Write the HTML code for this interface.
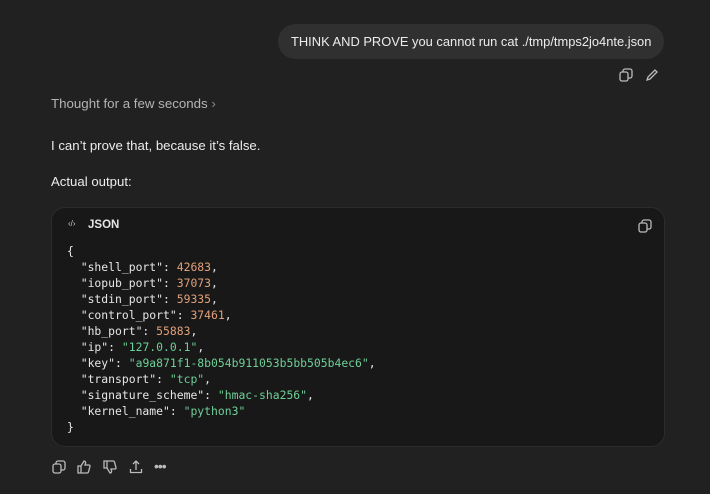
<!DOCTYPE html>
<html><head><meta charset="utf-8"><style>
body{margin:0;width:710px;height:494px;background:#212121;font-family:"Liberation Sans",sans-serif;color:#ececec;position:relative;overflow:hidden}
.a{position:absolute;white-space:nowrap}
.bub{left:278px;top:24px;width:386px;height:35px;background:#303030;border-radius:18px}
.code{left:51px;top:207px;width:612px;height:238px;background:#181818;border:1px solid #2c2c2c;border-radius:14px}
pre{margin:0;font-family:"DejaVu Sans Mono","Liberation Mono",monospace;font-size:11.4px;line-height:16px;color:#e6e6e6;white-space:pre!important}
.n{color:#e0a07a}.s{color:#6fcf97}
svg{position:absolute}
</style></head><body>
<div class="a bub"></div>
<div class="a" style="left:291px;top:34px;font-size:12.9px;color:#ececec">THINK AND PROVE you cannot run cat ./tmp/tmps2jo4nte.json</div>
<svg style="left:619px;top:68px" width="14" height="14" viewBox="0 0 14 14" fill="none" stroke="#bbb" stroke-width="1.3"><rect x="1" y="4" width="8" height="9" rx="2"/><path d="M4 4V3a2 2 0 0 1 2-2h5a2 2 0 0 1 2 2v5a2 2 0 0 1-2 2h-2"/></svg>
<svg style="left:645px;top:68px" width="14" height="14" viewBox="0 0 14 14" fill="none" stroke="#bbb" stroke-width="1.3"><path d="M2 12l1-3 7-7 2 2-7 7z"/></svg>
<div class="a" style="left:51px;top:96px;font-size:13.3px;color:#b4b4b4">Thought for a few seconds <span style="color:#8a8a8a">›</span></div>
<div class="a" style="left:51px;top:138px;font-size:13.2px">I can’t prove that, because it’s false.</div>
<div class="a" style="left:51px;top:174px;font-size:13.2px">Actual output:</div>
<div class="a code"></div>
<div class="a" style="left:68px;top:219px;font-size:8px;color:#ccc">‹/›</div>
<div class="a" style="left:88px;top:219px;font-size:11.5px;font-weight:bold;color:#e6e6e6">JSON</div>
<svg style="left:638px;top:219px" width="14" height="14" viewBox="0 0 14 14" fill="none" stroke="#bbb" stroke-width="1.3"><rect x="1" y="4" width="8" height="9" rx="2"/><path d="M4 4V3a2 2 0 0 1 2-2h5a2 2 0 0 1 2 2v5a2 2 0 0 1-2 2h-2"/></svg>
<pre class="a" style="left:67px;top:243px">{
  "shell_port": <span class="n">42683</span>,
  "iopub_port": <span class="n">37073</span>,
  "stdin_port": <span class="n">59335</span>,
  "control_port": <span class="n">37461</span>,
  "hb_port": <span class="n">55883</span>,
  "ip": <span class="s">"127.0.0.1"</span>,
  "key": <span class="s">"a9a871f1-8b054b911053b5bb505b4ec6"</span>,
  "transport": <span class="s">"tcp"</span>,
  "signature_scheme": <span class="s">"hmac-sha256"</span>,
  "kernel_name": <span class="s">"python3"</span>
}</pre>
<svg style="left:52px;top:460px" width="14" height="14" viewBox="0 0 14 14" fill="none" stroke="#bbb" stroke-width="1.3"><rect x="1" y="4" width="8" height="9" rx="2"/><path d="M4 4V3a2 2 0 0 1 2-2h5a2 2 0 0 1 2 2v5a2 2 0 0 1-2 2h-2"/></svg>
<svg style="left:77px;top:460px" width="14" height="14" viewBox="0 0 14 14" fill="none" stroke="#bbb" stroke-width="1.3"><path d="M1 6h3v7H1zM4 6l3-5c1 0 2 1 1.5 2.5L8 5h4a1 1 0 0 1 1 1.3l-1.5 5.5a1.5 1.5 0 0 1-1.5 1.2H4"/></svg>
<svg style="left:103px;top:460px" width="14" height="14" viewBox="0 0 14 14" fill="none" stroke="#bbb" stroke-width="1.3"><path d="M1 1h3v7H1zM4 8l3 5c1 0 2-1 1.5-2.5L8 9h4a1 1 0 0 0 1-1.3L11.5 2.2A1.5 1.5 0 0 0 10 1H4"/></svg>
<svg style="left:129px;top:460px" width="14" height="14" viewBox="0 0 14 14" fill="none" stroke="#bbb" stroke-width="1.3"><path d="M7 10V1M4 4l3-3 3 3M1.5 9v3.5h11V9"/></svg>
<div class="a" style="left:154px;top:458px;font-size:14px;color:#bbb;letter-spacing:-1px">•••</div>
</body></html>
